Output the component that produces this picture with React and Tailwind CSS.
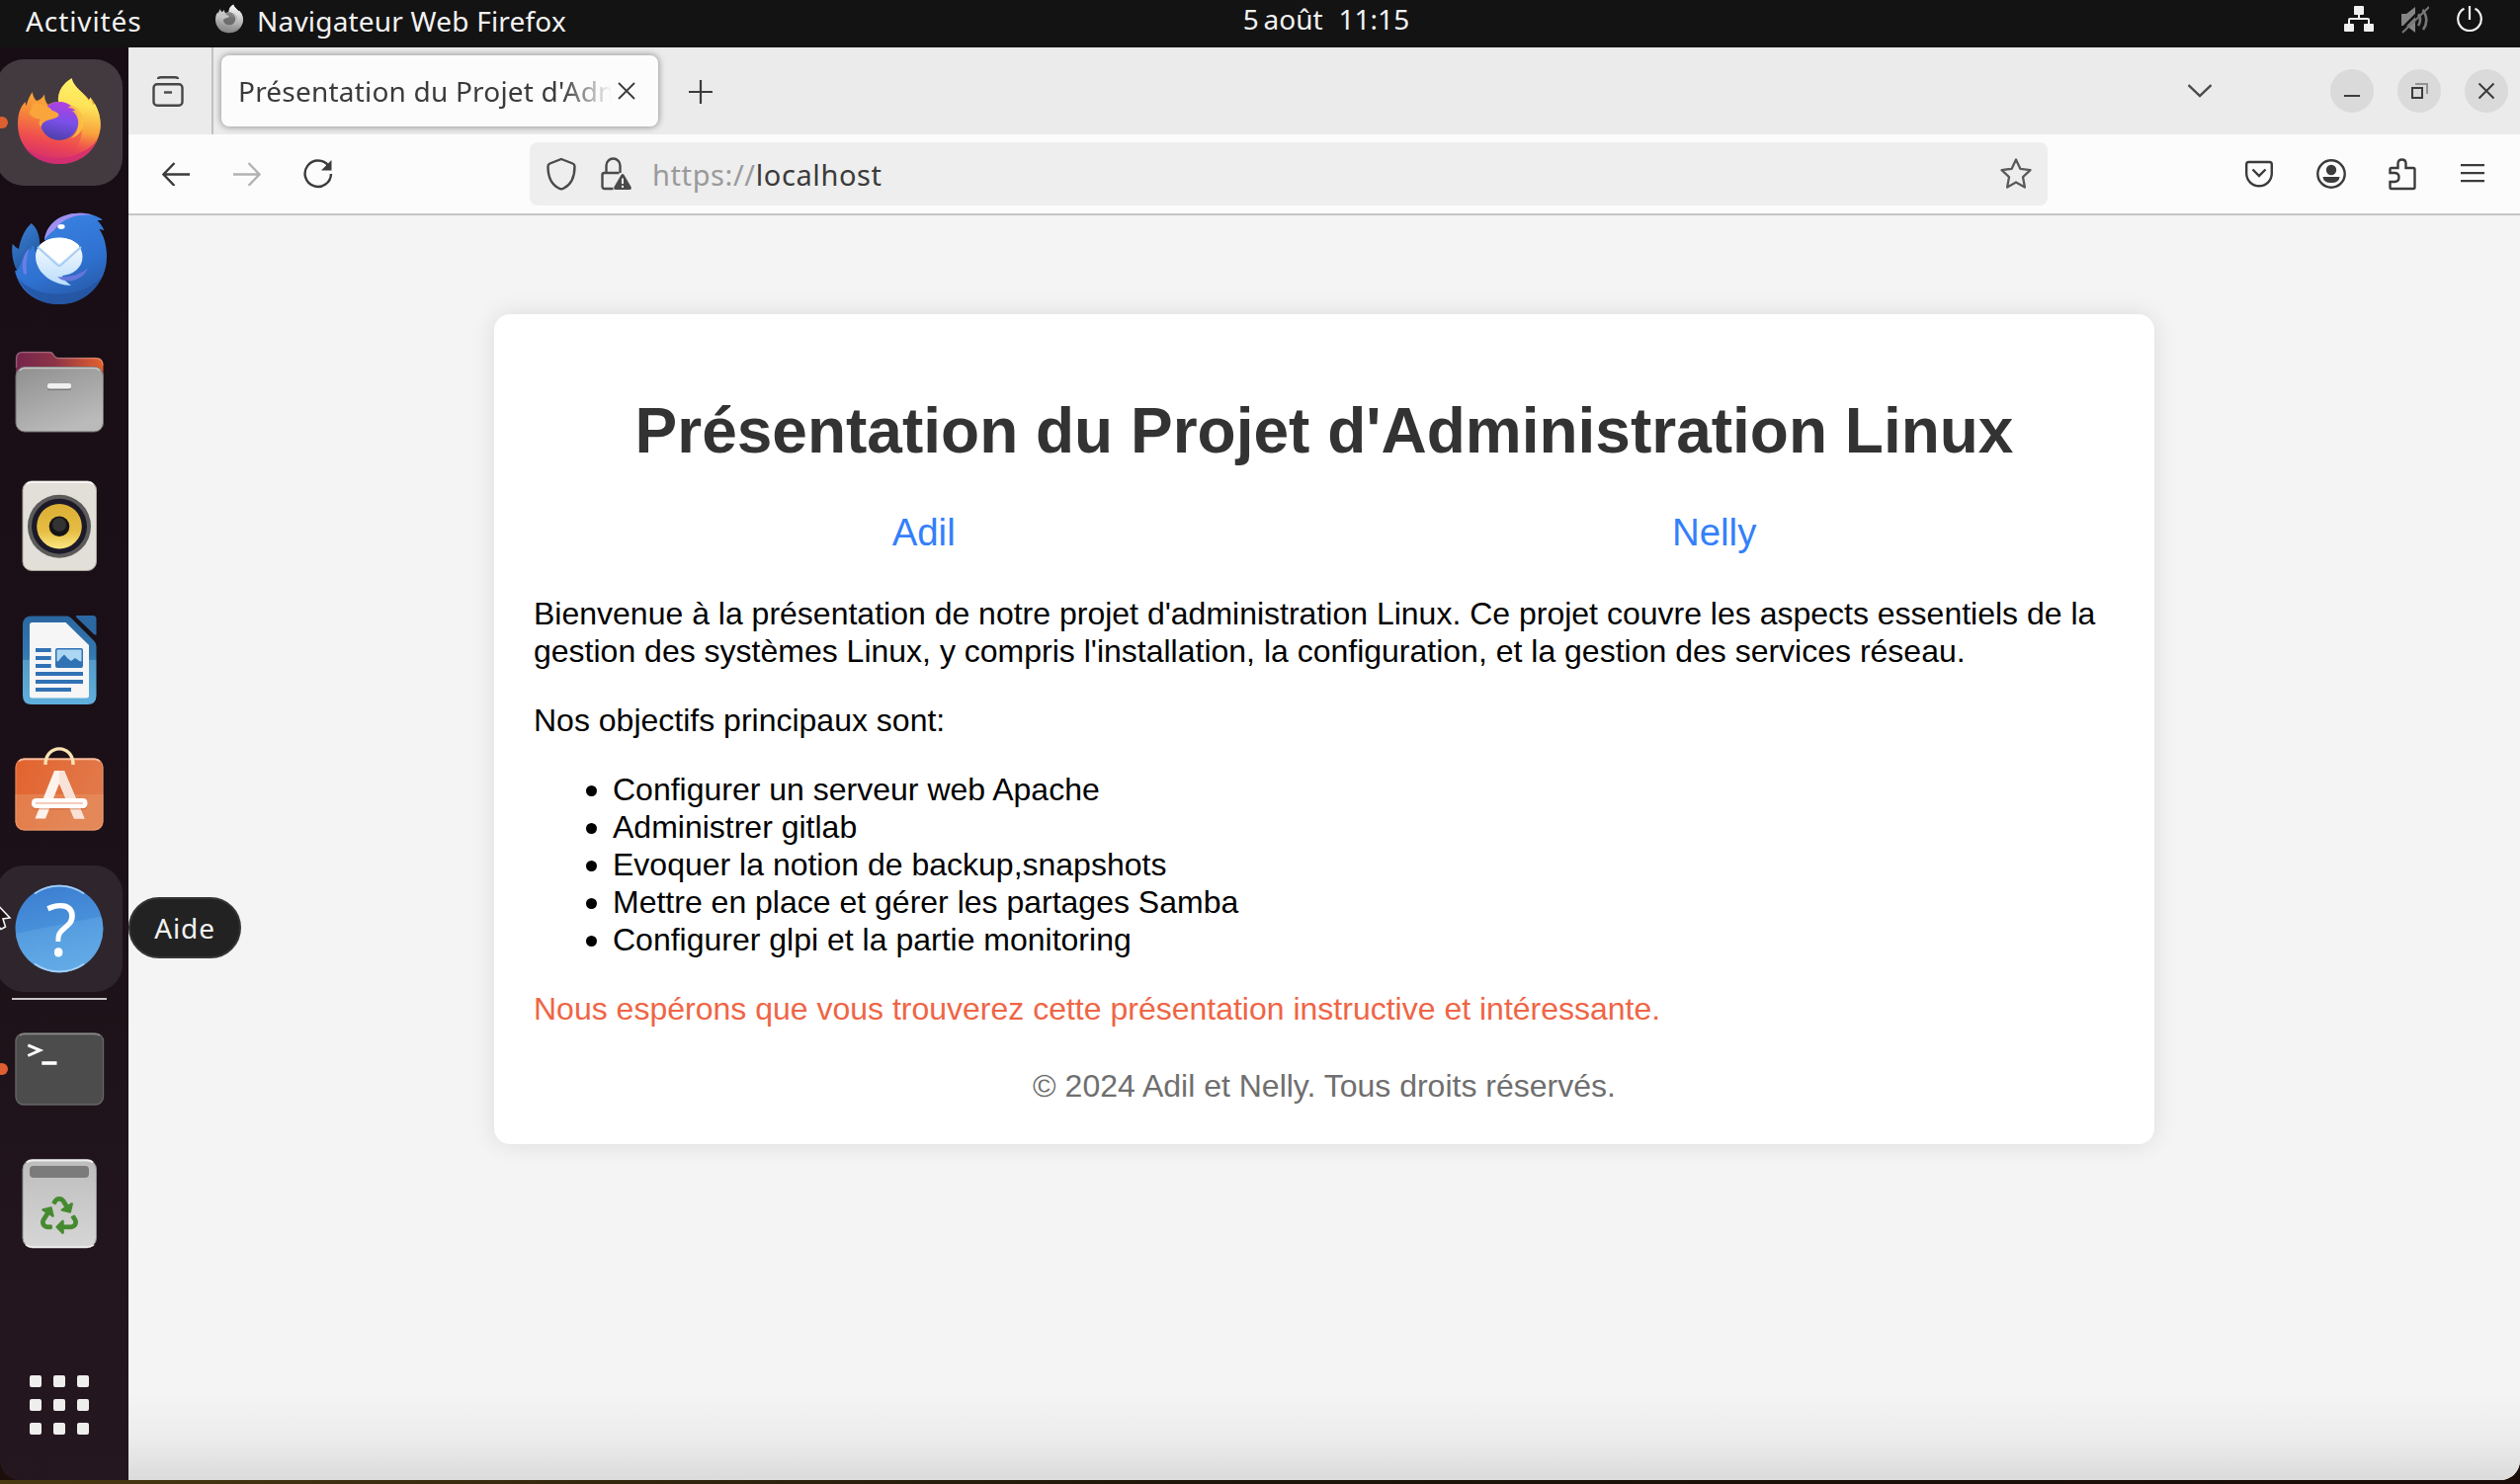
import React from "react";
import { FaRecycle } from "react-icons/fa";

/* ---------- dock icons, all on a 96 x 96 box ---------- */

function IconBox({ children }) {
  return (
    <svg viewBox="0 0 96 96" className="h-24 w-24 overflow-visible">
      {children}
    </svg>
  );
}

function FirefoxShapes({ gray = false }) {
  const id = gray ? "g" : "c";
  const stops = gray
    ? ["#fafafa", "#c9c9c9", "#9d9d9d", "#858585", "#8b8b8b", "#6a6a6a"]
    : ["#fff36b", "#fbb53a", "#f2603f", "#d32c72", "#b33fe0", "#4c3fa8"];
  return (
    <>
      <defs>
        <linearGradient id={`ff-body-${id}`} x1="0.6" y1="0" x2="0.4" y2="1">
          <stop offset="0.15" stopColor={stops[1]} />
          <stop offset="0.45" stopColor={gray ? stops[1] : "#f78b38"} />
          <stop offset="0.75" stopColor={gray ? stops[2] : "#ee4a50"} />
          <stop offset="1" stopColor={stops[3]} />
        </linearGradient>
        <linearGradient id={`ff-flame-${id}`} x1="0.4" y1="0" x2="0.3" y2="1">
          <stop offset="0" stopColor={stops[0]} />
          <stop offset="0.35" stopColor={gray ? "#dddddd" : "#fde257"} />
          <stop offset="0.7" stopColor={gray ? "#b5b5b5" : "#f9a13c"} />
          <stop offset="1" stopColor={gray ? "#909090" : "#ee4a50"} stopOpacity="0" />
        </linearGradient>
        <linearGradient id={`ff-globe-${id}`} x1="0.6" y1="0" x2="0.4" y2="1">
          <stop offset="0" stopColor={stops[4]} />
          <stop offset="0.5" stopColor={gray ? "#707070" : "#7a4fe8"} />
          <stop offset="1" stopColor={stops[5]} />
        </linearGradient>
      </defs>
      <path
        d="M20.7 17.3C21.5 21 22.5 24 25 26C28 25.500 31 23 33 19.500C33 24 34 27 36.500 30C40 28 44 27 47 27C46 17 52 8 60.700 3.300C62 12 73 18 78 25L79.500 22.500C85 29 89.700 40 89.700 50C89.700 73 71 90 48 90C25 90 6 73 6 50C6 38 9 32 13.500 27C14 29 14 30 14.500 31C16 26 18 21 20.700 17.300Z"
        fill={`url(#ff-body-${id})`}
      />
      <path
        d="M12 72C28 88 66 90 86 66C79 82 65 90 48 90C32 90 19 83 12 72Z"
        fill={gray ? "#858585" : "#cf2c74"}
        opacity="0.7"
      />
      <path
        d="M60.700 3.300C62 12 73 18 78 26L79.500 22.500L82 30L84 29C88 36 89.700 43 89.700 50C89.700 68 76 80 60 79C72 70 74 52 66 38C61 31 54 28 47 27C46 17 52 8 60.700 3.300Z"
        fill={`url(#ff-flame-${id})`}
      />
      <circle cx="48" cy="46.500" r="19.500" fill={`url(#ff-globe-${id})`} />
      <path
        d="M57 33C60 33 62 34 65 36L61 36C70 43 69 57 60 64C77 58 75 40 64 32C61 30 58 31 57 33Z"
        fill={gray ? "#b8b8b8" : "#fbc044"}
        opacity="0.9"
      />
      <path
        d="M22 28C31 28 37 31 41 36C45 37 47.500 38.500 47.500 40.500C47 43 42 44 37 45.500C33 47 30.500 48 29.500 53C27 50 27 46.500 29 45C24 44 19 42 17.500 38.500C19 36 20 32 22 28Z"
        fill={gray ? "#c4c4c4" : "#f9a53b"}
      />
    </>
  );
}

const Firefox = () => (
  <IconBox>
    <FirefoxShapes />
  </IconBox>
);

const Thunderbird = () => (
  <IconBox>
    <defs>
      <linearGradient id="tb-body" x1="0.3" y1="0" x2="0.7" y2="1">
        <stop offset="0" stopColor="#3a84e4" />
        <stop offset="0.6" stopColor="#2f71d0" />
        <stop offset="1" stopColor="#2658a6" />
      </linearGradient>
      <linearGradient id="tb-mail" x1="0" y1="0" x2="0" y2="1">
        <stop offset="0" stopColor="#ffffff" />
        <stop offset="1" stopColor="#b9dcfb" />
      </linearGradient>
      <linearGradient id="tb-wing" x1="0" y1="0" x2="0.4" y2="1">
        <stop offset="0" stopColor="#3c86dc" />
        <stop offset="1" stopColor="#1d4c92" />
      </linearGradient>
    </defs>
    <path d="M0.700 34.700C3 37 4.500 39 7 40C9 29 13 20 19.700 14C27 20 29 30 28 40L20 78C6 70 -2 52 0.700 34.700Z" fill="url(#tb-wing)" />
    <path
      d="M33 31C35 15 48 4 68 3.700C77 3.500 86 6 92 10.500C90 11 88 11 86.500 11C89.500 14 92 18 93.500 21.500C91.500 20.500 90 20 88.500 20C94 28 96 38 96 48C96 75 74 96 48 96C26 96 8 84 3 62C8 64 10 46 18 40C20 46 18 36 22 37C25 50 30 60 38 62L40 36Z"
      fill="url(#tb-body)"
    />
    <path d="M7 70C22 90 70 92 91 68C83 86 67 96 48 96C29 96 14 86 7 70Z" fill="#2455a2" opacity="0.8" />
    <path d="M33 31C35 15 48 4 68 3.700C75 3.600 80 4.800 82 6C66 4 54 9 46 17C42 23 36 25 33 31Z" fill="#9f8fee" />
    <path d="M12 65C9 54 12 44 17.500 39.500C14.500 49 14 56 15 66Z" fill="#6f7ce6" />
    <path d="M24 47C24 36 35 28.500 48 28.500C62 28.500 71.500 37 71.500 48C71.500 59 62 66 51 67C52 72 57 74 60 77C44 77 24 66 24 47Z" fill="url(#tb-mail)" />
    <path d="M26 38L46 56Q48 58 50 56L70 38" fill="none" stroke="#a8cdf3" strokeWidth="2" />
    <path d="M27.500 37C36 26 60 26 68.500 37L50 53.500Q48 55.500 46 53.500Z" fill="#ffffff" />
    <path d="M46 68C58 69 70 66 77 59C73 70 60 75 50 71Z" fill="#6676dc" />
    <ellipse cx="50" cy="17.500" rx="3.600" ry="2.400" fill="#ffffff" />
  </IconBox>
);

const Files = () => (
  <IconBox>
    <defs>
      <linearGradient id="fi-back" x1="0" y1="0" x2="1" y2="0">
        <stop offset="0" stopColor="#75254d" />
        <stop offset="0.45" stopColor="#8c3448" />
        <stop offset="1" stopColor="#e5602c" />
      </linearGradient>
      <linearGradient id="fi-front" x1="0" y1="0" x2="0.5" y2="1">
        <stop offset="0" stopColor="#8f8f8f" />
        <stop offset="1" stopColor="#bababa" />
      </linearGradient>
    </defs>
    <path d="M4 40V15Q4 8 11 8H38Q41 8 42.500 11Q44 14 47 14H85Q92.500 14 92.500 22V40Z" fill="url(#fi-back)" />
    <path d="M4.500 24V15Q4.500 8.500 11 8.500H38Q41 8.500 42.500 11.500Q44 14.500 47 14.500H85Q92 14.500 92 22" fill="none" stroke="#ffffff" strokeOpacity="0.25" strokeWidth="1.500" />
    <rect x="4" y="23.500" width="88.500" height="65.500" rx="9" fill="url(#fi-front)" stroke="#6f6f6f" strokeWidth="1" />
    <path d="M8 27Q10 24.500 13 24.500H83Q87 24.500 89 27" fill="none" stroke="#c9c9c9" strokeWidth="1.500" />
    <rect x="36" y="41" width="24" height="6" rx="2" fill="#777777" />
    <rect x="36" y="40" width="24" height="5.500" rx="2" fill="#f0f0f0" />
  </IconBox>
);

const Rhythmbox = () => (
  <IconBox>
    <defs>
      <linearGradient id="rh-cone" x1="0" y1="0" x2="0" y2="1">
        <stop offset="0" stopColor="#dcae35" />
        <stop offset="0.6" stopColor="#e6bd43" />
        <stop offset="1" stopColor="#fbe681" />
      </linearGradient>
    </defs>
    <rect x="11" y="3" width="74.500" height="90.500" rx="9" fill="#e1dfd7" stroke="#a9a79f" strokeWidth="1" />
    <path d="M15 6Q17 4 20 4H77Q80 4 82 6" fill="none" stroke="#ffffff" strokeWidth="1.500" />
    <circle cx="48" cy="48.700" r="32" fill="#5c5b59" />
    <circle cx="48" cy="48.700" r="28" fill="#1c1a29" />
    <circle cx="48" cy="48.700" r="22.800" fill="url(#rh-cone)" />
    <circle cx="48" cy="48.700" r="10.300" fill="#151515" />
    <circle cx="48" cy="47" r="7" fill="#333333" />
  </IconBox>
);

const Writer = () => (
  <IconBox>
    <defs>
      <linearGradient id="wr-frame" x1="0" y1="0" x2="0" y2="1">
        <stop offset="0" stopColor="#2b669f" />
        <stop offset="0.49" stopColor="#357bb4" />
        <stop offset="0.5" stopColor="#559bc9" />
        <stop offset="1" stopColor="#5fb0dd" />
      </linearGradient>
    </defs>
    <path d="M20 3.500H55Q58 3.500 60 5.500L83 28.500Q85.500 31 85.500 34V84Q85.500 93 76.500 93H20Q11 93 11 84V12.500Q11 3.500 20 3.500Z" fill="url(#wr-frame)" />
    <path d="M65 3H82Q85.500 3 85.500 6.500V22.500Q84 23 82.500 21.500L65.500 5Q64.500 4 65 3Z" fill="#2c68a2" />
    <path d="M20.500 10H54.500L78 33V84Q78 86.500 75.500 86.500H20.500Q18 86.500 18 84V12.500Q18 10 20.500 10Z" fill="#f6f6f7" />
    <path d="M24 36H39.700V40H24ZM24 44H39.700V48H24ZM24 52H39.700V56H24ZM24 60H72V64H24ZM24 68H72V72H24ZM24 76H60V80H24Z" fill="#3172b5" />
    <rect x="44" y="36" width="28" height="20" rx="2" fill="#3172b5" />
    <rect x="45.500" y="37.500" width="25" height="12" rx="1" fill="#abd7f3" />
    <path d="M45.500 51L50 45.500L53 42.500L56.500 46.500L60 49L64 46L70.500 50.500V54H45.500Z" fill="#3172b5" />
  </IconBox>
);

const Software = () => (
  <IconBox>
    <defs>
      <linearGradient id="so-bag" x1="0" y1="0" x2="1" y2="0.3">
        <stop offset="0" stopColor="#e2632e" />
        <stop offset="1" stopColor="#e2794a" />
      </linearGradient>
    </defs>
    <rect x="3.500" y="11.500" width="89" height="73" rx="9" fill="url(#so-bag)" />
    <path d="M3.500 48H92.500V75.500Q92.500 84.500 83.500 84.500H12.500Q3.500 84.500 3.500 75.500Z" fill="#e9a071" opacity="0.4" />
    <path d="M7 14.500Q9 12.300 12.500 12.300H83.500Q87 12.300 89 14.500" fill="none" stroke="#f7c3a7" strokeWidth="1.800" />
    <rect x="4" y="12" width="88" height="72" rx="8.500" fill="none" stroke="#f3b08c" strokeOpacity="0.5" strokeWidth="1" />
    <path d="M34 18C34 -3.500 62 -3.500 62 18" fill="none" stroke="#f8e2b2" strokeWidth="3.400" />
    <path d="M43 24H53L73.500 72.500H63L48 37L34 72.500H23.500Z" fill="#fdf3ec" />
    <path d="M48 24H53L73.500 72.500H63L48 37Z" fill="#f9e3d8" />
    <rect x="20" y="53.500" width="56.500" height="10" rx="4.500" fill="#c9562c" opacity="0.4" />
    <rect x="20" y="52" width="56.500" height="10" rx="4.500" fill="#ffffff" />
    <rect x="24" y="56" width="48" height="2" fill="#f7cdbb" />
  </IconBox>
);

const Help = () => (
  <IconBox>
    <defs>
      <linearGradient id="he-disc" x1="0" y1="0" x2="0.2" y2="1">
        <stop offset="0" stopColor="#3b7cd0" />
        <stop offset="0.53" stopColor="#4890da" />
        <stop offset="0.54" stopColor="#559cdf" />
        <stop offset="1" stopColor="#62aae6" />
      </linearGradient>
    </defs>
    <circle cx="48" cy="48" r="44.500" fill="url(#he-disc)" />
    <path d="M23 12.500A43.500 43.500 0 0 1 73 12.500M23 83.500A43.500 43.500 0 0 0 73 83.500" fill="none" stroke="#a6d0f4" strokeWidth="1.600" />
    <text x="50" y="76" textAnchor="middle" fontSize="73" fill="#ffffff" className="font-['Open_Sans',sans-serif]">
      ?
    </text>
  </IconBox>
);

const Terminal = () => (
  <IconBox>
    <rect x="4" y="12" width="88.500" height="72" rx="8" fill="#4c4c4c" stroke="#656565" strokeWidth="1.400" />
    <path d="M8 14Q10 12.500 13 12.500H83Q87 12.500 89 14" fill="none" stroke="#8a8a8a" strokeWidth="1.600" />
    <path d="M16.300 23.800L28.500 29L16.300 34.500" fill="none" stroke="#ffffff" strokeWidth="3" />
    <path d="M30.300 42H45.500" stroke="#ffffff" strokeWidth="3.600" />
  </IconBox>
);

const Trash = () => (
  <IconBox>
    <defs>
      <linearGradient id="tr-bin" x1="0" y1="0" x2="0" y2="1">
        <stop offset="0" stopColor="#bdbdbd" />
        <stop offset="1" stopColor="#d6d6d6" />
      </linearGradient>
    </defs>
    <rect x="11" y="3.500" width="74.500" height="89.500" rx="10" fill="url(#tr-bin)" stroke="#8d8d8d" strokeWidth="1" />
    <path d="M15 6.500Q17 4.500 21 4.500H76Q80 4.500 82 6.500" fill="none" stroke="#eeeeee" strokeWidth="1.800" />
    <path d="M14 90Q17 92.300 21 92.300H76Q80 92.300 83 90" fill="none" stroke="#f5f5f5" strokeWidth="1.500" />
    <rect x="18" y="10" width="60" height="12" rx="4" fill="#7b7b7b" />
    <FaRecycle x="29" y="41" size={38} color="#468a30" />
  </IconBox>
);

/* ---------- dock ---------- */

function DockItem({ children, tone = "", running = false }) {
  return (
    <div className={`relative -ml-1 flex h-32 w-32 items-center justify-center rounded-[28px] ${tone}`}>
      {running && <span className="absolute top-[58px] left-0 h-3 w-3 rounded-full bg-[#de5f30]" />}
      {children}
    </div>
  );
}

function Dock() {
  return (
    <aside className="relative w-[130px] rounded-bl-[20px] bg-linear-to-b from-[#180d14] via-[#1b1017] to-[#25171f] pt-3">
      <div className="flex flex-col gap-2">
        <DockItem tone="bg-[#433a40]" running>
          <Firefox />
        </DockItem>
        <DockItem>
          <Thunderbird />
        </DockItem>
        <DockItem>
          <Files />
        </DockItem>
        <DockItem>
          <Rhythmbox />
        </DockItem>
        <DockItem>
          <Writer />
        </DockItem>
        <DockItem>
          <Software />
        </DockItem>
        <div className="relative">
          <DockItem tone="bg-[#2f252c]">
            <Help />
          </DockItem>
          <div className="absolute top-8 left-[130px] z-10 flex h-[62px] w-[114px] items-center justify-center rounded-full border-2 border-[#353535] bg-[#222222] text-[28px] tracking-[0.9px] text-[#f2f2f2]">
            Aide
          </div>
          <svg viewBox="0 0 12 30" className="absolute top-[38px] left-0 h-[30px] w-3">
            <path d="M-8 -4L10 15L3 16L5.500 24L1 26.500L-4 20Z" fill="#1c1418" stroke="#f4f4f4" strokeWidth="1.600" />
          </svg>
        </div>
      </div>
      <div className="mt-1.5 ml-3 h-0.5 w-24 bg-[#c9c4c8]" />
      <div className="mt-1.5 flex flex-col gap-2">
        <DockItem running>
          <Terminal />
        </DockItem>
        <DockItem>
          <Trash />
        </DockItem>
      </div>
      <div className="mt-[110px] ml-[30px] grid w-[60px] grid-cols-3 gap-3">
        {Array.from({ length: 9 }, (_, i) => (
          <span key={i} className="h-3 w-3 rounded-[2px] bg-[#eeeeec]" />
        ))}
      </div>
    </aside>
  );
}

/* ---------- system bar ---------- */

function TopBar() {
  return (
    <header className="grid h-12 grid-cols-3 bg-[#131313] text-[28px] leading-[42px] text-[#f2f2f2]">
      <div className="flex pl-[26px]">
        <span className="w-[192px] tracking-[0.9px]">Activités</span>
        <svg viewBox="6 3 84 88" className="mt-1 h-[30px] w-7">
          <FirefoxShapes gray />
        </svg>
        <span className="ml-[14px] tracking-[0.2px]">Navigateur Web Firefox</span>
      </div>
      <div className="flex justify-center gap-4 pl-[134px] leading-[39px]">
        <span>5&#8239;août</span>
        <span>11:15</span>
      </div>
      <div className="flex justify-end gap-7 pt-1.5 pr-[38px]">
        <svg viewBox="0 0 30 26" className="h-[26px] w-[30px]" fill="#f0f0f0">
          <rect x="10" y="0" width="10" height="9" rx="1" />
          <rect x="0" y="18" width="10" height="8" rx="1" />
          <rect x="20" y="18" width="10" height="8" rx="1" />
          <path d="M14 8H16V12H24Q26 12 26 14V19H24V14H6V19H4V14Q4 12 6 12H14Z" />
        </svg>
        <svg viewBox="0 0 28 28" className="h-7 w-7">
          <path d="M0 8H5L14 1V27L5 20H0Z" fill="#858585" />
          <path d="M17 8Q21 14 17 20M21 3Q29 14 22 24" fill="none" stroke="#777777" strokeWidth="2.600" />
          <path d="M0 23.500L25 -1.500" stroke="#131313" strokeWidth="2.500" />
          <path d="M1 27L28 1" stroke="#777777" strokeWidth="2" />
        </svg>
        <svg viewBox="0 0 26 26" className="h-[26px] w-[26px]" fill="none" stroke="#f0f0f0" strokeWidth="2.200">
          <path d="M7.500 2.800A11.800 11.800 0 1 0 18.500 2.800" />
          <path d="M13 0V14" />
        </svg>
      </div>
    </header>
  );
}

/* ---------- browser chrome ---------- */

function WindowButton({ children }) {
  return (
    <span className="flex h-11 w-11 items-center justify-center rounded-full bg-[#dadada]">
      <svg viewBox="0 0 18 18" className="h-[18px] w-[18px]" fill="none" stroke="#3b3b3b" strokeWidth="2">
        {children}
      </svg>
    </span>
  );
}

function TabStrip() {
  return (
    <div className="flex h-[88px] bg-[#ebebeb]">
      <div className="flex w-[86px] border-r-2 border-[#c0c0c0] pt-[28px] pl-6">
        <svg viewBox="0 0 32 32" className="h-8 w-8" fill="none" stroke="#474747" strokeWidth="2.400">
          <path d="M6 4Q6 2.200 9 2.200H23Q26 2.200 26 4" />
          <rect x="1.500" y="9.200" width="29" height="21.500" rx="3.500" />
          <path d="M12 17.500H20" />
        </svg>
      </div>
      <div className="mt-2 ml-2 flex h-[72px] w-[442px] items-center rounded-lg bg-[#fcfcfc] pl-[17px] shadow-[0_0_6px_1px_rgba(0,0,0,0.35)]">
        <span className="w-[378px] overflow-hidden mask-r-from-[328px] mask-r-to-[378px] text-[28px] tracking-[0.2px] whitespace-nowrap text-[#3b3b3b]">
          Présentation du Projet d'Administration
        </span>
        <svg viewBox="0 0 18 18" className="ml-[6px] h-[18px] w-[18px]" stroke="#3b3b3b" strokeWidth="1.800">
          <path d="M1 1L17 17M17 1L1 17" />
        </svg>
      </div>
      <svg viewBox="0 0 24 24" className="mt-[33px] ml-[31px] h-6 w-6" stroke="#3b3b3b" strokeWidth="2.200">
        <path d="M12 0V24M0 12H24" />
      </svg>
      <div className="ml-auto flex items-center gap-6 pr-3">
        <svg viewBox="0 0 24 14" className="mr-24 h-3.5 w-6" fill="none" stroke="#4a4a4a" strokeWidth="2.400">
          <path d="M0.500 1L12 12L23.500 1" />
        </svg>
        <WindowButton>
          <path d="M1 14H17" />
        </WindowButton>
        <WindowButton>
          <path d="M2 6H12V16H2Z" />
          <path d="M5 2H17V12" strokeOpacity="0.45" />
        </WindowButton>
        <WindowButton>
          <path d="M1.500 1.500L16.500 16.500M16.500 1.500L1.500 16.500" />
        </WindowButton>
      </div>
    </div>
  );
}

function ToolBar() {
  return (
    <div className="flex h-[82px] items-start border-b-2 border-[#c6c6c6] bg-[#fcfcfc] pt-2">
      <div className="flex h-16 w-[406px] items-center pl-[34px]">
        <svg viewBox="0 0 28 24" className="h-6 w-7" fill="none" stroke="#3b3b3b" strokeWidth="2.400">
          <path d="M28 12.500H1.500M12.500 1L1.500 12.500L12.500 24" />
        </svg>
        <svg viewBox="0 0 28 24" className="ml-11 h-6 w-7" fill="none" stroke="#b2b2b2" strokeWidth="2.400">
          <path d="M0 12.500H26.500M15.500 1L26.500 12.500L15.500 24" />
        </svg>
        <svg viewBox="0 0 30 30" className="ml-[43px] h-[30px] w-[30px]" fill="none" stroke="#3b3b3b" strokeWidth="2.400">
          <path d="M25.500 7A13.200 13.200 0 1 0 28 15" />
          <path d="M28.500 1V11.500H18Z" fill="#3b3b3b" stroke="none" />
        </svg>
      </div>
      <div className="flex h-16 w-[1536px] items-center rounded-lg bg-[#eeeeee] pr-4 pl-4">
        <svg viewBox="0 0 32 34" className="h-[34px] w-8" fill="none" stroke="#4a4a4a" strokeWidth="2.400">
          <path d="M16 2L27.500 6.500Q29.500 7.300 29.500 9.500C29.500 19 26.500 27.500 18.500 31.500Q16 33 13.500 31.500C5.500 27.500 2.500 19 2.500 9.500Q2.500 7.300 4.500 6.500Z" />
        </svg>
        <svg viewBox="0 0 32 34" className="ml-6 h-[34px] w-8" fill="none" stroke="#4a4a4a" strokeWidth="2.400">
          <path d="M5.500 16V8.500A7 7 0 0 1 19.500 8.500V16" />
          <path d="M12.500 32H4Q1.500 32 1.500 29.500V18Q1.500 16 3.500 16H18.500" />
          <path d="M20.500 18Q22 16 23.500 18L30.500 30Q31.500 33 29 33H15Q12.500 33 13.500 30Z" fill="#4a4a4a" stroke="none" />
          <path d="M22 21.500V27M22 28.800V31" stroke="#eeeeee" strokeWidth="2" />
        </svg>
        <span className="ml-5 pt-0.5 text-[29px] tracking-[0.6px] text-[#3b3b3b]">
          <span className="text-[#9a9a9a]">https://</span>localhost
        </span>
        <svg viewBox="0 0 32 32" className="ml-auto h-8 w-8" fill="none" stroke="#5b5b5b" strokeWidth="2.300" strokeLinejoin="round">
          <path d="M16 1.500L20.300 10.800L30.500 12.200L23 19.200L24.900 29.500L16 24.500L7.100 29.500L9 19.200L1.500 12.200L11.700 10.800Z" />
        </svg>
      </div>
      <div className="flex h-16 flex-1 items-center justify-end pr-9">
        <svg viewBox="0 0 28 28" className="h-7 w-7" fill="none" stroke="#3b3b3b" strokeWidth="2.400">
          <path d="M3.500 2H24.500Q26.800 2 26.800 4.500V13.500A12.800 12.800 0 0 1 1.200 13.500V4.500Q1.200 2 3.500 2Z" />
          <path d="M7.500 9.500L14 16L20.500 9.500" />
        </svg>
        <svg viewBox="0 0 30 30" className="ml-11 h-[30px] w-[30px]">
          <circle cx="15" cy="15" r="13.700" fill="none" stroke="#3b3b3b" strokeWidth="2.400" />
          <circle cx="15" cy="11" r="5.200" fill="#3b3b3b" />
          <path d="M6.500 18H23.500Q23 24 15 24Q7 24 6.500 18Z" fill="#3b3b3b" />
        </svg>
        <svg viewBox="0 0 28 34" className="ml-[43px] h-[34px] w-7" fill="none" stroke="#3b3b3b" strokeWidth="2.400">
          <path d="M1.500 16V12.500Q1.500 11 3 11H9.500V6.500Q9.500 2.500 13.500 2.500Q17.500 2.500 17.500 6.500V11H25Q26.500 11 26.500 12.500V30.500Q26.500 32 25 32H3Q1.500 32 1.500 30.500V25H6Q10.500 25 10.500 20.500Q10.500 16 6 16Z" />
        </svg>
        <svg viewBox="0 0 24 20" className="ml-[45px] h-5 w-6" stroke="#3b3b3b" strokeWidth="2.200">
          <path d="M0 1.200H24M0 9.200H24M0 17.200H24" />
        </svg>
      </div>
    </div>
  );
}

/* ---------- web page ---------- */

const goals = [
  "Configurer un serveur web Apache",
  "Administrer gitlab",
  "Evoquer la notion de backup,snapshots",
  "Mettre en place et gérer les partages Samba",
  "Configurer glpi et la partie monitoring",
];

function Page() {
  return (
    <main className="flex flex-1 flex-col justify-between rounded-br-[20px] bg-[#f4f4f4] font-['Liberation_Sans',Arial,sans-serif] text-[32px] leading-[38px] text-black">
      <article className="mt-[100px] ml-[370px] h-[840px] w-[1680px] rounded-2xl bg-white px-10 pt-[82px] shadow-[0_0_24px_rgba(0,0,0,0.1)]">
        <h1 className="text-center text-[64px] leading-[72px] font-bold text-[#333333]">
          Présentation du Projet d'Administration Linux
        </h1>
        <nav className="mt-[44px] flex justify-around text-[38.4px] leading-[46px] text-[#3480fa]">
          <a>Adil</a>
          <a>Nelly</a>
        </nav>
        <p className="mt-10">
          Bienvenue à la présentation de notre projet d'administration Linux. Ce projet couvre les aspects essentiels de la
          gestion des systèmes Linux, y compris l'installation, la configuration, et la gestion des services réseau.
        </p>
        <p className="mt-8">Nos objectifs principaux sont:</p>
        <ul className="mt-8 pl-[53px]">
          {goals.map((goal) => (
            <li key={goal} className="flex items-center gap-4 before:mt-[3px] before:h-[11px] before:w-[11px] before:rounded-full before:bg-black">
              {goal}
            </li>
          ))}
        </ul>
        <p className="mt-8 text-[#ef6545]">Nous espérons que vous trouverez cette présentation instructive et intéressante.</p>
        <footer className="mt-10 text-center text-[#6f6f6f]">© 2024 Adil et Nelly. Tous droits réservés.</footer>
      </article>
      <div className="h-[90px] rounded-br-[20px] bg-linear-to-b from-[#f4f4f4] via-[#ededed] to-[#dbdbdb]" />
    </main>
  );
}

export default function App() {
  return (
    <div className="flex h-[1502px] w-[2550px] flex-col overflow-hidden bg-[#1c0f09] font-['Noto_Sans',sans-serif]">
      <TopBar />
      <div className="flex h-[1450px]">
        <Dock />
        <div className="flex flex-1 flex-col">
          <TabStrip />
          <ToolBar />
          <Page />
        </div>
      </div>
      <div className="flex-1 bg-linear-to-r from-[#4a3a12] via-[#1c1409] to-[#1a0c08]" />
    </div>
  );
}
